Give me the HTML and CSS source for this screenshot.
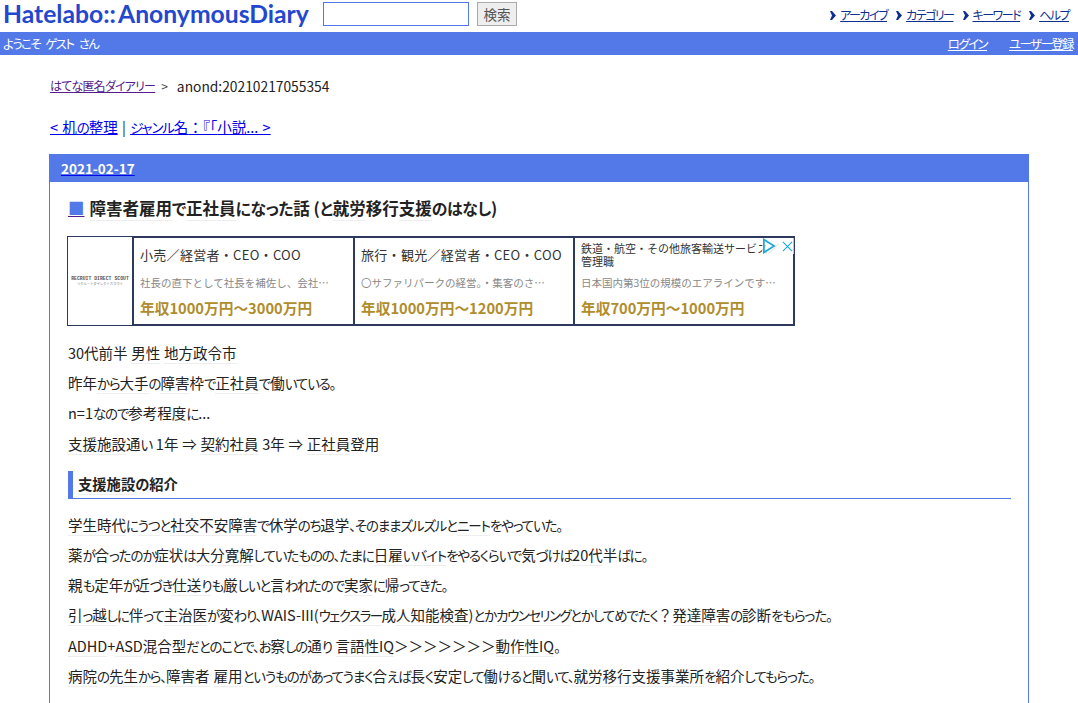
FILE: index.html
```html
<!DOCTYPE html>
<html lang="ja">
<head>
<meta charset="utf-8">
<title>障害者雇用で正社員になった話 (と就労移行支援のはなし)</title>
<link rel="stylesheet" href="styles.css">
</head>
<body>
<header class="top">
  <div class="brand">
    <a class="logo">Hatelabo:: AnonymousDiary</a>
    <input class="search" type="text">
    <button class="go">検索</button>
  </div>
  <nav class="menu">
    <a class="menu-item"><svg class="chev" viewBox="0 0 6 9"><path d="M0 0h2l4 4.500-4 4.500H0l2-4.500z"/></svg><span class="menu-text">アーカイブ</span></a>
    <a class="menu-item"><svg class="chev" viewBox="0 0 6 9"><path d="M0 0h2l4 4.500-4 4.500H0l2-4.500z"/></svg><span class="menu-text">カテゴリー</span></a>
    <a class="menu-item"><svg class="chev" viewBox="0 0 6 9"><path d="M0 0h2l4 4.500-4 4.500H0l2-4.500z"/></svg><span class="menu-text">キーワード</span></a>
    <a class="menu-item"><svg class="chev" viewBox="0 0 6 9"><path d="M0 0h2l4 4.500-4 4.500H0l2-4.500z"/></svg><span class="menu-text">ヘルプ</span></a>
  </nav>
</header>
<div class="welcome">
  <span class="welcome-text">ようこそ ゲスト さん</span>
  <span class="account"><a>ログイン</a><a>ユーザー登録</a></span>
</div>
<main class="page">
  <p class="crumbs"><a class="visited">はてな匿名ダイアリー</a><span class="sep">&gt;</span><span>anond:20210217055354</span></p>
  <p class="pager"><a>&lt; 机<span class="k">の</span>整理</a> | <a><span class="k">ジャンル</span>名<span class="fw">：『「</span>小説... &gt;</a></p>
  <section class="day">
    <h2 class="day-head"><a>2021-02-17</a></h2>
    <div class="day-body">
      <h3 class="title"><a class="mark">■</a><span class="kw">障害者雇用</span><span class="k">で</span><span class="kw">正社員</span><span class="k">になった</span>話 (<span class="k">と</span><span class="kw">就労</span>移行<span class="kw">支援</span><span class="k">のはなし</span>)</h3>
      <div class="ad">
        <div class="ad-logo"><span class="ad-logo-main">RECRUIT DIRECT SCOUT</span><span class="ad-logo-sub">リクルートダイレクトスカウト</span></div>
        <div class="ad-card">
          <div class="ad-job">小売／経営者・CEO・COO</div>
          <div class="ad-desc">社長の直下として社長を補佐し、会社…</div>
          <div class="ad-pay">年収1000万円～3000万円</div>
        </div>
        <div class="ad-card ad-card-mid">
          <div class="ad-job">旅行・観光／経営者・CEO・COO</div>
          <div class="ad-desc">〇サファリパークの経営。・集客のさ…</div>
          <div class="ad-pay">年収1000万円～1200万円</div>
        </div>
        <div class="ad-card ad-card-last">
          <div class="ad-job ad-job-long">鉄道・航空・その他旅客輸送サービス／管理職</div>
          <div class="ad-desc">日本国内第3位の規模のエアラインです…</div>
          <div class="ad-pay">年収700万円～1000万円</div>
        </div>
        <div class="ad-choice">
          <svg class="ad-play" viewBox="0 0 15 17"><path d="M2 1.500 13 8.500 2 15.500z" fill="none" stroke="#1aa9d8" stroke-width="1.800"/></svg>
          <svg class="ad-close" viewBox="0 0 12 12"><path d="M1 1l10 10M11 1l-10 10" fill="none" stroke="#1aa9d8" stroke-width="1.200"/></svg>
        </div>
      </div>
      <p>30代前半 <span class="kw">男性</span> <span class="kw">地方政令市</span></p>
      <p>昨年<span class="kw"><span class="k">から</span>大手</span><span class="k">の</span><span class="kw">障害</span>枠<span class="k">で</span><span class="kw">正社員</span><span class="k">で</span>働<span class="k">いている。</span></p>
      <p>n=1<span class="k">なので</span>参考程度<span class="k">に</span>...</p>
      <p><span class="kw">支援施設</span>通<span class="k">い</span> 1年 ⇒ <span class="kw">契約社員</span> 3年 ⇒ <span class="kw">正社員</span>登用</p>
      <h4 class="sub"><span class="kw">支援施設</span>の紹介</h4>
      <p><span class="kw">学生時代</span><span class="k">に</span><span class="kw k">うつ</span><span class="k">と</span><span class="kw">社交不安障害</span><span class="k">で</span>休学<span class="k">のち</span>退学<span class="k">、そのままズルズルと</span><span class="kw k">ニート</span><span class="k">をやっていた。</span></p>
      <p>薬<span class="k">が</span>合<span class="k">ったのか</span>症状<span class="k">は</span><span class="kw">大分寛解</span><span class="k">していた</span><span class="kw k">もの</span><span class="k">の、たまに</span><span class="kw">日雇<span class="k">いバイト</span></span><span class="k">をやるくらいで</span>気<span class="k">づけば</span><span class="kw">20代</span>半<span class="k">ばに。</span></p>
      <p>親<span class="k">も</span>定年<span class="k">が</span>近<span class="k">づき</span><span class="kw">仕送<span class="k">り</span></span><span class="k">も</span>厳<span class="k">しいと</span>言<span class="k">われたので</span><span class="kw">実家</span><span class="k">に</span>帰<span class="k">ってきた。</span></p>
      <p><span class="kw">引<span class="k">っ</span>越<span class="k">し</span></span><span class="k">に</span>伴<span class="k">って</span><span class="kw">主治医</span><span class="k">が</span>変<span class="k">わり、</span>WAIS-III(<span class="k ks">ウェク</span><span class="kw k ks">スラー</span>成<span class="kw">人知能</span><span class="kw">検査</span>)<span class="k">とか</span><span class="kw k ks">カウンセリング</span><span class="k">とかしてめでたく</span><span class="fw">？</span><span class="kw">発達障害</span><span class="k">の</span>診断<span class="k">をもらった。</span></p>
      <p><span class="kw">ADHD</span>+<span class="kw">ASD</span>混合型<span class="k">だとのことで、お</span>察<span class="k">しの</span>通<span class="k">り</span> <span class="kw">言語性IQ</span><span class="fw">＞＞＞＞＞＞＞</span><span class="kw">動作性IQ</span><span class="k">。</span></p>
      <p><span class="kw">病院</span><span class="k">の</span><span class="kw">先生<span class="k">から</span></span><span class="k">、</span><span class="kw">障害者</span><span class="kw gap">雇用</span><span class="k">という</span><span class="kw k">もの</span><span class="k">があってうまく</span>合<span class="k">えば</span>長<span class="k">く</span>安定<span class="k">して</span>働<span class="k">けると</span>聞<span class="k">いて、</span><span class="kw">就労移行支援事業所</span><span class="k">を</span>紹介<span class="k">してもらった。</span></p>
    </div>
  </section>
</main>
</body>
</html>
```
FILE: styles.css
```css
* { box-sizing: border-box; }
html, body { height: 703px; overflow: hidden; }
body {
  margin: 0;
  background: #fff;
  color: #222;
  font-family: "Noto Sans CJK JP", "Open Sans", sans-serif;
  font-size: 14px;
  font-feature-settings: "palt";
}
a { color: #0000ee; text-decoration: underline; cursor: pointer; }
.k { font-size: 0.93em; letter-spacing: -1.100px; }
.ks { letter-spacing: -1.500px; }
.fw { font-feature-settings: normal; }
.gap { margin-left: 4px; }
.top {
  height: 32px;
  display: flex;
  justify-content: space-between;
  align-items: flex-start;
  padding: 0 9px 0 3px;
}
.brand { display: flex; align-items: flex-start; }
.logo {
  width: 310px;
  font-family: Lato, sans-serif;
  font-weight: 700;
  font-size: 24.700px;
  line-height: 28px;
  word-spacing: -3px;
  color: #2447cf;
  text-decoration: none;
  font-feature-settings: normal;
  white-space: nowrap;
}
.search {
  width: 146px;
  height: 24px;
  margin: 2px 0 0 10px;
  border: 1px solid #5279e7;
  background: #fff;
}
.go {
  width: 40px;
  height: 24px;
  margin: 2px 0 0 8px;
  padding: 0;
  border: 1px solid #aaa;
  background: #eee;
  color: #555;
  font: 13.500px "Noto Sans CJK JP", sans-serif;
}
.menu { display: flex; gap: 9px; padding-top: 6px; }
.menu-item { display: flex; align-items: center; gap: 4px; text-decoration: none; }
.chev { width: 6px; height: 9px; fill: #0d2f8e; }
.menu-text {
  font-size: 12px;
  line-height: 18px;
  letter-spacing: -1.500px;
  color: #0d2f8e;
  text-decoration: underline;
}
.welcome {
  height: 23px;
  padding: 0 5px 0 3px;
  display: flex;
  justify-content: space-between;
  align-items: center;
  background: #5279e7;
  color: #fff;
  font-size: 12.500px;
  letter-spacing: -1.600px;
  word-spacing: 4px;
}
.account { display: flex; gap: 22px; }
.account a { color: #fff; }
.page { padding: 0 49px; }
.crumbs {
  display: flex;
  align-items: center;
  margin: 0;
  padding: 21px 0 0 1px;
  height: 41px;
  line-height: 20px;
  font-size: 13.800px;
  color: #222;
}
.crumbs a { font-size: 12px; letter-spacing: -0.800px; color: #551a8b; }
.sep { margin: 0 9px 0 6px; font-size: 12px; color: #444; }
.pager { margin: 21px 0 0; padding-left: 1px; height: 20px; line-height: 20px; font-size: 14.500px; word-spacing: 1px; color: #222; }
.day { margin-top: 17px; width: 980px; border: 1px solid #5279e7; border-top: 0; }
.day-head {
  margin: 0;
  height: 28px;
  padding: 0 11px;
  background: #5279e7;
  font-size: 13.500px;
  font-weight: 700;
  line-height: 28px;
}
.day-head a { color: #fff; text-decoration-color: #0000ee; }
.day-body { padding: 0 17px 40px 18px; }
.title {
  margin: 0;
  padding-top: 14px;
  height: 54px;
  font-size: 16.500px;
  font-weight: 700;
  line-height: 24px;
  color: #222;
}
.title .k { font-size: 0.96em; letter-spacing: -0.300px; }
.mark { color: #5279e7; text-decoration-color: #551a8b; margin-right: 5px; }
.kw { border-bottom: 1px solid #eee; }
.ad {
  position: relative;
  display: flex;
  width: 728px;
  height: 90px;
  margin: 0 0 12px -1px;
  font-feature-settings: normal;
}
.ad-logo {
  width: 65px;
  border: 1px solid #2d3a5e;
  border-right: 0;
  display: flex;
  flex-direction: column;
  justify-content: center;
  align-items: center;
}
.ad-logo-main {
  font: 700 4.800px/6px "Liberation Mono", monospace;
  color: #555;
  white-space: nowrap;
}
.ad-logo-sub { font-size: 3.300px; line-height: 4px; color: #777; white-space: nowrap; }
.ad-card {
  width: 221px;
  padding: 0 5px 0 6px;
  border: 2px solid #2d3a5e;
  border-right: 0;
  display: flex;
  flex-direction: column;
  overflow: hidden;
  white-space: nowrap;
}
.ad-card-mid { width: 220px; }
.ad-card-last { width: 222px; border-right: 2px solid #2d3a5e; }
.ad-job {
  height: 37px;
  padding-top: 4px;
  font-size: 13px;
  line-height: 25px;
  letter-spacing: 0.300px;
  color: #333;
}
.ad-job-long {
  padding-top: 4px;
  font-size: 11px;
  line-height: 13px;
  white-space: normal;
  letter-spacing: 0;
}
.ad-desc { height: 17px; margin-top: -1px; font-size: 10.500px; line-height: 17px; color: #888; overflow: hidden; }
.ad-pay { margin-top: 6px; font-size: 14.700px; font-weight: 700; line-height: 22px; color: #b08d2c; }
.ad-choice {
  position: absolute;
  top: 2px;
  right: 1px;
  display: flex;
  align-items: center;
  gap: 6px;
  padding: 0 1px 0 0;
  background: rgba(255,255,255,.7);
}
.ad-play { width: 14px; height: 16px; }
.ad-close { width: 11px; height: 11px; }
.day-body p {
  margin: 0;
  height: 30.200px;
  line-height: 30px;
  font-size: 14.500px;
  word-spacing: 0.500px;
  white-space: nowrap;
}
.sub {
  margin: 12px 0 11px;
  height: 28px;
  padding-left: 5px;
  border-left: 5px solid #5279e7;
  border-bottom: 1px solid #5279e7;
  font-size: 14.300px;
  font-weight: 700;
  line-height: 25px;
}
```
